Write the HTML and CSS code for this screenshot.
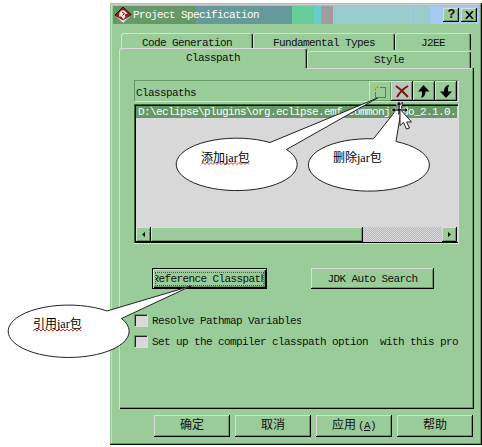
FILE: index.html
```html
<!DOCTYPE html>
<html lang="zh-CN">
<head>
<meta charset="utf-8">
<title>Project Specification</title>
<link rel="stylesheet" href="styles.css">
</head>
<body>
<main class="window">
  <header class="titlebar">
    <svg class="logo" width="18" height="18" viewBox="0 0 18 18"><path d="M9 1L17 8.500 9 16.500 1 9Z" fill="#8c2020" stroke="#400"/><path d="M1.500 10l7.500 7 8-7.500-8 5Z" fill="#eee"/><path d="M5.500 6.500q3-4 6-1l2 2-3 1 1 2-2 3-2-3H5Z" fill="#f4e8e0"/><path d="M8 6l2.500 1.500-2 2" stroke="#a00" fill="none"/></svg>
    <h1>Project Specification</h1>
    <div class="caption-buttons">
      <button class="raised">?</button>
      <button class="raised"><svg width="9" height="8" viewBox="0 0 9 8"><path d="M.8 0L8 8M8 0L.8 8" stroke="#000" stroke-width="1.6"/></svg></button>
    </div>
  </header>
  <nav class="tabs">
    <div class="tab-row back"><span class="tab generation">Code Generation</span><span class="tab types">Fundamental Types</span><span class="tab j2ee">J2EE</span></div>
    <div class="tab-row front"><span class="tab selected">Classpath</span><span class="tab style">Style</span></div>
  </nav>
  <section class="panel">
    <div class="toolbar">
      <span class="label">Classpaths</span>
      <button class="tool raised soft"><svg width="18" height="17" viewBox="0 0 18 17"><rect x="4.500" y="4.500" width="10" height="10" fill="none" stroke="#222" stroke-dasharray="1 1"/><path d="M4.500 1v8M1 4.500h8M2 2l5 5M7 2L2 7" stroke="#b8c828" stroke-dasharray="2 1"/></svg></button>
      <button class="tool raised hot"><svg width="18" height="17" viewBox="0 0 18 17"><path d="M3 3Q9 7 15 14M15 3Q8 7 4 14" stroke="#801010" stroke-width="2" fill="none"/></svg></button>
      <button class="tool raised"><svg width="18" height="17" viewBox="0 0 18 17"><path d="M8.500 2L14.500 8.500h-4q0 4-3 6H6Q7.500 12 7 8.500H3Z"/></svg></button>
      <button class="tool raised"><svg width="18" height="17" viewBox="0 0 18 17"><path d="M9 15L3 8.500h4q0-5 4-6.500h1Q10.500 5 11 8.500h4Z"/></svg></button>
    </div>
    <div class="list">
      <div class="item">D:\eclipse\plugins\org.eclipse.emf.commonj.sdo_2.1.0.</div>
      <div class="scrollbar">
        <span class="arrow raised"><svg width="3" height="5" viewBox="0 0 3 5"><path d="M3 0v5L0 2.500Z"/></svg></span>
        <span class="thumb raised"></span>
        <span class="track"></span>
        <span class="arrow raised"><svg width="3" height="5" viewBox="0 0 3 5"><path d="M0 0v5L3 2.500Z"/></svg></span>
      </div>
    </div>
    <div class="actions">
      <button class="raised reference"><span class="focus">Reference Classpath</span></button>
      <button class="raised search">JDK Auto Search</button>
    </div>
    <div class="check"><i class="box"></i><span class="pathmap">Resolve Pathmap Variables</span></div>
    <div class="check"><i class="box"></i><span>Set up the compiler classpath option  with this pro</span></div>
  </section>
  <footer>
    <button class="raised">确定</button>
    <button class="raised">取消</button>
    <button class="raised"><span class="apply">应用<span class="key">(<u>A</u>)</span></span></button>
    <button class="raised">帮助</button>
  </footer>
</main>
<svg class="notes" width="482" height="447" viewBox="0 0 482 447">
  <g class="balloon">
    <path d="M268.500 142.500L376 98 285 149.500A60.500 26.200 0 1 1 268.500 142.500Z" transform="translate(1.500 0)"/>
    <path d="M371 138.800L400 102 393.500 141.500A60.500 26.200 0 1 1 371 138.800Z" transform="translate(2.500 0)"/>
    <path d="M107 311L191 286 121.500 318.500A60.500 26.200 0 1 1 107 311Z"/>
  </g>
  <g class="squiggle">
    <path d="M201 164.500l2-2 2 2 2-2 2 2 2-2 2 2 2-2 2 2 2-2 2 2 2-2 2 2 2-2 2 2 2-2 2 2 2-2 2 2 2-2 2 2 2-2 2 2 2-2 2 2"/>
    <path d="M33 331l2-2 2 2 2-2 2 2 2-2 2 2 2-2 2 2 2-2 2 2 2-2 2 2 2-2 2 2 2-2 2 2 2-2 2 2 2-2 2 2 2-2 2 2 2-2 2 2"/>
  </g>
  <g class="note-text"><text x="201" y="162">添加<tspan class="latin">jar</tspan>包</text><text x="333" y="162">删除<tspan class="latin">jar</tspan>包</text><text x="33" y="328">引用<tspan class="latin">jar</tspan>包</text></g>
  <path d="M399 101l3 4h-2v4h5v-2l3 3-3 3v-2h-5v4h-2v-4h-3v2l-4-3 4-3v2h3v-4h-2Z" fill="#111" stroke="#fff" stroke-width=".6"/>
  <path d="M400 109v16.500l3.500-3 3 6.500 3-1-3-6h5Z" fill="#fff" stroke="#222"/>
</svg>
</body>
</html>
```
FILE: styles.css
```css
* { box-sizing: border-box; }
body {
  margin: 0;
  width: 482px;
  height: 447px;
  overflow: hidden;
  position: relative;
  background: #fff;
  color: #111;
  font: 11px/12px "Liberation Mono", "Noto Sans CJK SC", monospace;
  letter-spacing: -0.6px;
}
button { font: inherit; letter-spacing: inherit; color: inherit; border: 0; padding: 0; margin: 0; }
svg { display: block; flex: none; }
.raised {
  display: flex;
  align-items: center;
  justify-content: center;
  background: #99cc99;
  box-shadow: inset -1px -1px #000, inset 1px 1px #dcdcdc, inset -2px -2px #669966;
}
.window {
  margin: 3px 0 0 110px;
  width: 372px;
  height: 442px;
  padding: 3px;
  background: #99cc99;
  box-shadow: inset -1px -1px #000, inset 1px 1px #99cc99, inset -2px -2px #669966, inset 2px 2px #d0d0d0;
}
.titlebar {
  height: 18px;
  display: flex;
  align-items: center;
  padding: 0 2px 0 1px;
  background: linear-gradient(90deg, #669966 83px, #669999 83px 179px, #66cc99 179px 201px, #66cccc 201px 208px, #a09ca0 208px 220px, #99cccc 220px 297px, #a6caf0 297px 298px, #99cccc 298px 317px, #a6caf0 317px);
}
h1 { font: inherit; color: #fff; margin: 0 0 0 1px; flex: 1; }
.caption-buttons { display: flex; gap: 2px; }
.caption-buttons button { width: 16px; height: 14px; font-size: 13px; font-weight: bold; }
.tabs { margin: 9px 8px 0 6px; height: 35px; }
.tab-row { display: flex; }
.back { height: 15px; padding-left: 2px; }
.front { height: 20px; align-items: flex-end; }
.tab {
  text-align: center;
  border: 1px solid #dcdcdc;
  border-right-color: #111;
  border-bottom: 0;
  border-radius: 3px 3px 0 0;
  box-shadow: inset -1px 0 #669966;
}
.back .tab { height: 17px; padding-top: 3px; }
.generation { width: 132px; }
.types { width: 142px; }
.j2ee { width: 76px; }
.front .tab { height: 17px; padding-top: 2px; }
.front .selected { width: 188px; height: 20px; padding-top: 3px; position: relative; background: #99cc99; }
.style { width: 164px; }
.panel {
  margin-left: 6px;
  width: 355px;
  height: 341px;
  padding: 12px 14px 0 15px;
  background: linear-gradient(#dcdcdc, #dcdcdc) 188px 0 / 165px 1px no-repeat;
  box-shadow: inset 1px 0 #dcdcdc, inset -1px -1px #000, inset -2px -2px #669966;
}
.toolbar {
  height: 22px;
  width: 325px;
  display: flex;
  padding: 0 1px 1px;
  border: 1px solid;
  border-color: #669966 #dcdcdc #dcdcdc #669966;
}
.label { flex: 1; padding: 6px 0 0; }
.tool { width: 22px; height: 20px; }
.soft { box-shadow: inset 1px 1px #dcdcdc, inset -1px -1px #669966; }
.hot { background: #b8c8b8; }
.list {
  width: 325px;
  height: 140px;
  margin-top: 2px;
  padding: 2px;
  display: flex;
  flex-direction: column;
  background: #d8d8d8;
  box-shadow: inset -1px -1px #dcdcdc, inset 1px 1px #336633, inset 2px 2px #000, inset 0 -2px #000;
}
.item { height: 12px; padding-left: 2px; overflow: hidden; white-space: nowrap; background: #669966; color: #fff; }
.scrollbar { display: flex; margin-top: auto; height: 15px; }
.arrow { width: 15px; }
.thumb { width: 212px; }
.track { flex: 1; background: repeating-conic-gradient(#99cc99 0 25%, #dcdcdc 0 50%) 0 0 / 2px 2px; }
.actions { display: flex; gap: 44px; margin: 24px 0 25px 18px; }
.actions button { height: 21px; }
.reference { width: 115px; border: 1px solid #000; box-shadow: inset 1px 1px #dcdcdc, inset -1px -1px #000, inset -2px -2px #669966; }
.focus { display: flex; justify-content: center; width: 109px; height: 14px; border: 1px dotted #555; overflow: hidden; white-space: nowrap; }
.search { width: 123px; }
.check { display: flex; align-items: center; gap: 4px; width: 325px; height: 13px; margin-bottom: 8px; white-space: pre; }
.box { width: 14px; height: 13px; flex: none; background: #d8d8d8; border: 1px solid; border-color: #669966 #dcdcdc #dcdcdc #669966; box-shadow: inset 1px 1px #222; }
.pathmap { width: 149px; overflow: hidden; }
footer { display: flex; gap: 5px; margin: 6px 0 0 41px; }
footer button { width: 76px; height: 22px; font-size: 12px; letter-spacing: 0; }
.key { font-size: 11px; letter-spacing: -0.6px; margin-left: 2px; }
.notes { position: absolute; left: 0; top: 0; }
.balloon { fill: #fff; stroke: #222; stroke-width: 1; }
.squiggle { fill: none; stroke: #f22; stroke-width: 1; }
.note-text { font: 12px "Noto Sans CJK SC", sans-serif; letter-spacing: 0; fill: #000; }
.latin { font-family: "Liberation Serif", serif; font-size: 12px; }
```
